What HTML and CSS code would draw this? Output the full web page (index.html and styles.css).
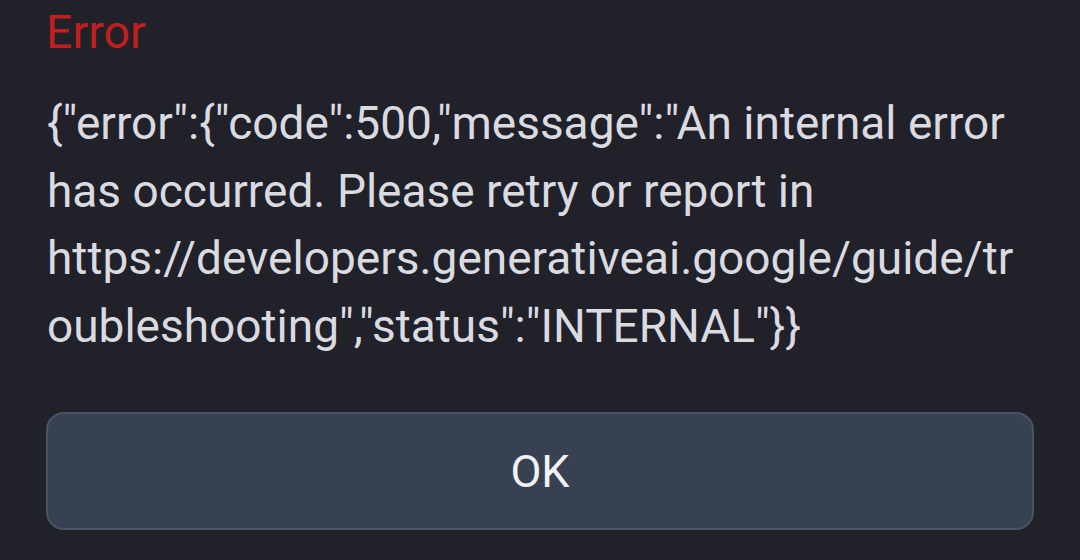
FILE: index.html
```html
<!DOCTYPE html>
<html lang="en">
<head>
<meta charset="utf-8">
<title>Error</title>
<link rel="stylesheet" href="styles.css">
</head>
<body>
<div class="dialog">
  <h2 class="title">Error</h2>
  <p class="message">{"error":{"code":500,"message":"An internal error has occurred. Please retry or report in https://developers.generativeai.google/guide/troubleshooting","status":"INTERNAL"}}</p>
  <button class="ok">OK</button>
</div>
</body>
</html>
```

FILE: styles.css
```css
html, body {
  margin: 0;
  padding: 0;
  background: #212129;
  height: 100%;
}
body {
  font-family: Roboto, "Liberation Sans", sans-serif;
  overflow: hidden;
}
.dialog {
  width: 988px;
  padding: 0 0 0 46px;
  display: flex;
  flex-direction: column;
}
.title {
  margin: 0;
  font-weight: 400;
  font-size: 46.5px;
  line-height: 64px;
  color: #c01f1f;
}
.message {
  margin: 26px 0 0 0;
  font-size: 46px;
  line-height: 67.5px;
  color: #dadbe1;
  overflow-wrap: anywhere;
  padding-left: 1px;
}
.ok {
  margin-top: 52px;
  height: 118px;
  width: 988px;
  box-sizing: border-box;
  background: #374151;
  border: 2px solid #4a5465;
  border-radius: 18px;
  color: #f1f2f5;
  font-family: Roboto, "Liberation Sans", sans-serif;
  font-size: 45px;
  padding: 0;
}
```
